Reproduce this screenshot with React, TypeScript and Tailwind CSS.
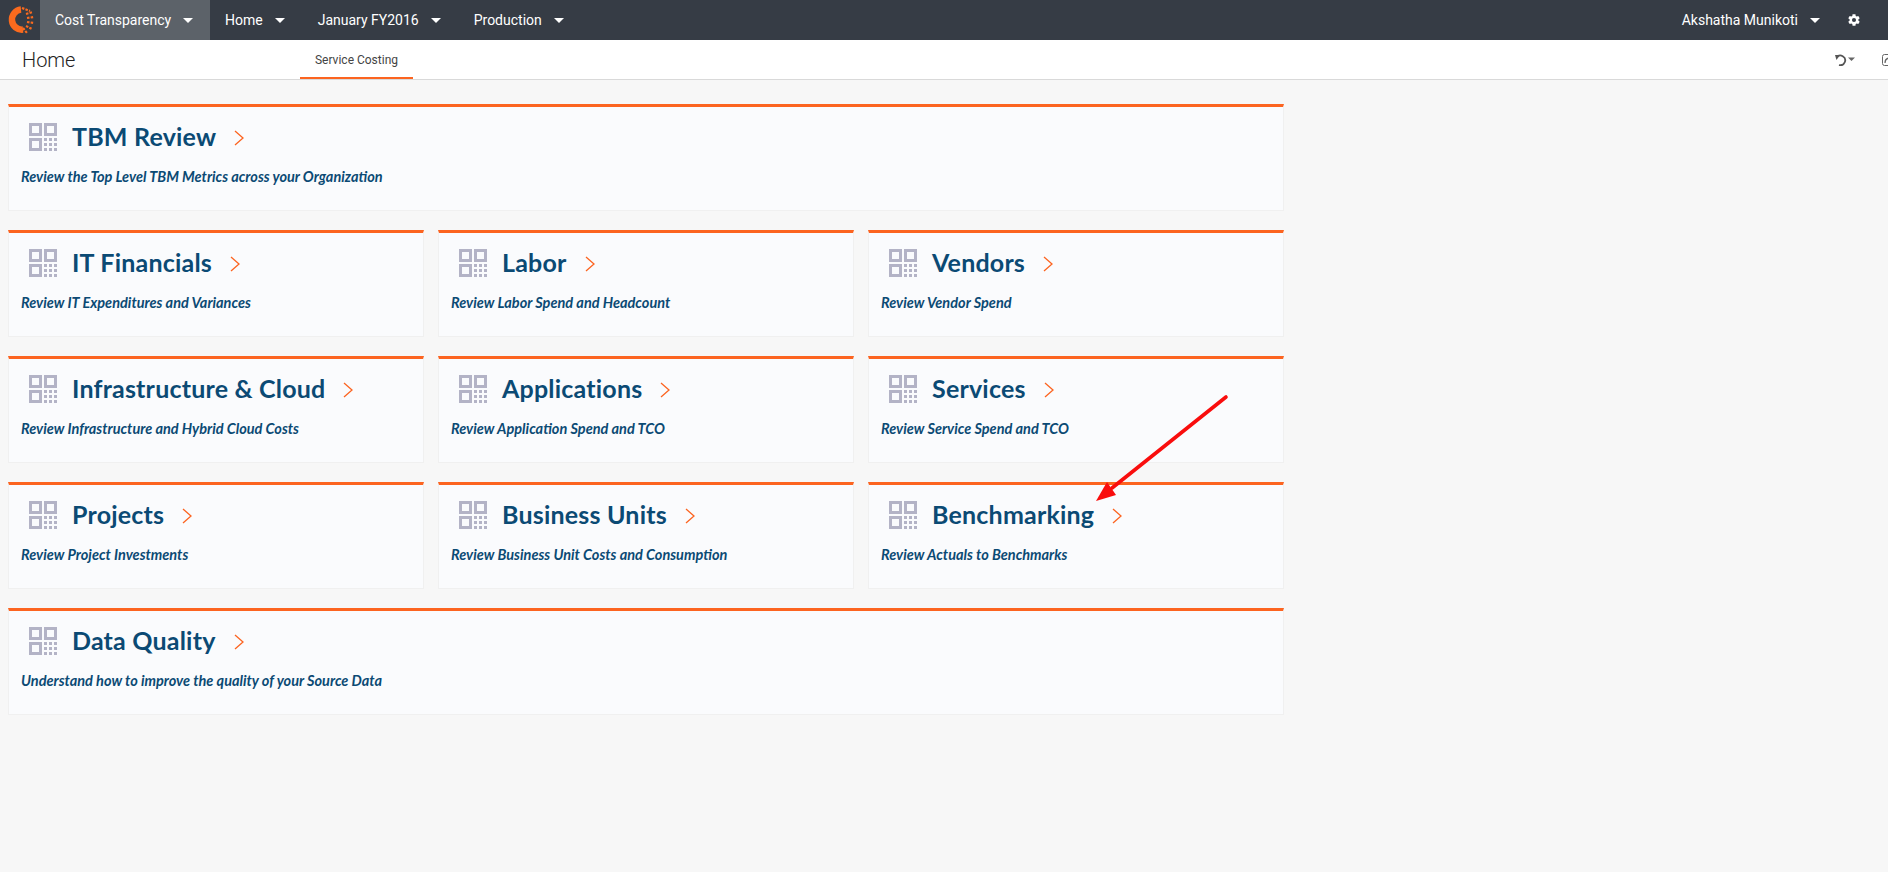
import React from "react";

const NavCaret = () => (
  <span className="ml-3 inline-block w-0 h-0 border-x-[5px] border-x-transparent border-t-[5px] border-t-white" />
);

const GridIcon = () => (
  <svg width="28" height="28" viewBox="0 0 28 28" className="shrink-0">
    <g fill="none" stroke="#b3b3c6" strokeWidth="3">
      <rect x="1.5" y="1.5" width="10" height="10" />
      <rect x="16.5" y="1.5" width="10" height="10" />
      <rect x="1.5" y="16.5" width="10" height="10" />
    </g>
    <g fill="#b3b3c6">
      <rect x="15" y="15" width="3" height="3" />
      <rect x="20" y="15" width="3" height="3" />
      <rect x="25" y="15" width="3" height="3" />
      <rect x="15" y="20" width="3" height="3" />
      <rect x="20" y="20" width="3" height="3" />
      <rect x="25" y="20" width="3" height="3" />
      <rect x="15" y="25" width="3" height="3" />
      <rect x="20" y="25" width="3" height="3" />
      <rect x="25" y="25" width="3" height="3" />
    </g>
  </svg>
);

const Logo = () => (
  <svg width="27" height="28" viewBox="0 0 27 28">
    <path
      d="M14 3.6A10 10 0 1 0 16 23.6"
      fill="none"
      stroke="#fa6a1e"
      strokeWidth="6.5"
    />
    <g stroke="#fa6a1e" strokeWidth="2.2" strokeDasharray="2.5 1.2">
      <path d="M15 2L23 5" />
      <path d="M19 8L26 6" />
      <path d="M20 12L27 11" />
      <path d="M20 16L27 17" />
      <path d="M19 20L25 23" />
      <path d="M16 22L20 27" />
    </g>
  </svg>
);

const Card = ({ title, desc }: { title: string; desc: string }) => (
  <div className="h-[107px] border-t-[3px] border-t-[#fc6420] border-x border-b border-x-[#f0f0f0] border-b-[#f0f0f0] bg-[#fafbfd] pl-[12px]">
    <div className="flex items-center h-[28px] mt-[16px] pl-[8px]">
      <GridIcon />
      <span className="ml-[15px] mb-[2px] text-[25px] leading-[28px] tracking-[0.2px] font-bold text-[#0b4a74] font-['Lato',sans-serif]">
        {title}
      </span>
      <svg width="10" height="16" viewBox="0 0 10 16" className="ml-[18px] mt-[1px]">
        <path d="M1 1L9 8L1 15" fill="none" stroke="#fc6420" strokeWidth="1.3" />
      </svg>
    </div>
    <p className="mt-[17px] text-[14.5px] leading-[18px] italic font-bold text-[#0b4a74] font-['Lato',sans-serif]">
      {desc}
    </p>
  </div>
);

export default function App() {
  return (
    <div className="relative min-h-[872px] bg-[#f7f7f7] font-['Roboto',sans-serif] overflow-hidden">
      <nav className="flex h-[40px] items-center bg-[#363c45] text-[14px] text-white whitespace-nowrap">
        <div className="flex w-[40px] justify-center">
          <Logo />
        </div>
        <div className="flex h-full w-[170px] items-center bg-[#5c6269] pl-[15px]">
          Cost Transparency
          <NavCaret />
        </div>
        <div className="flex items-center ml-[15px]">
          Home
          <NavCaret />
        </div>
        <div className="flex items-center ml-[33px]">
          January FY2016
          <NavCaret />
        </div>
        <div className="flex items-center ml-[33px]">
          Production
          <NavCaret />
        </div>
        <div className="ml-auto flex items-center pr-[27px]">
          Akshatha Munikoti
          <NavCaret />
          <svg width="14" height="14" viewBox="0 0 24 24" fill="#ffffff" className="ml-[27px]">
            <path d="M19.4 13a7.5 7.5 0 0 0 0-2l2.4-1.8-2.4-4.2-2.8 1.2a7.5 7.5 0 0 0-1.7-1L14.5 2h-5l-.4 3.2a7.5 7.5 0 0 0-1.7 1L4.6 5 2.2 9.2 4.6 11a7.5 7.5 0 0 0 0 2l-2.4 1.8L4.6 19l2.8-1.2a7.5 7.5 0 0 0 1.7 1l.4 3.2h5l.4-3.2a7.5 7.5 0 0 0 1.7-1l2.8 1.2 2.4-4.2zM12 15.5a3.5 3.5 0 1 1 0-7 3.5 3.5 0 0 1 0 7z" />
          </svg>
        </div>
      </nav>

      <header className="flex h-[40px] items-center border-b border-b-[#d9d9d9] bg-white">
        <h1 className="ml-[22px] w-[278px] text-[20px] font-light text-[#222]">Home</h1>
        <div className="flex h-full w-[113px] items-center justify-center border-b-[2px] border-b-[#fc6420] pt-[3px] text-[12px] text-[#444]">
          Service Costing
        </div>
        <div className="ml-auto flex items-center mr-[-6px]">
          <svg width="20" height="12" viewBox="0 0 20 12" className="shrink-0">
            <path d="M1.5 3.5A4.8 4.8 0 1 1 4 11" fill="none" stroke="#555" strokeWidth="1.8" />
            <path d="M0 1L5 1L1.5 6Z" fill="#555" />
            <path d="M13 3.5L20 3.5L16.5 7Z" fill="#666" />
          </svg>
          <svg width="12" height="12" viewBox="0 0 12 12" className="ml-[27px] shrink-0">
            <rect x="0.5" y="0.5" width="11" height="11" rx="2" fill="none" stroke="#666" />
            <path d="M3 9C3 5 5 4 8 4" fill="none" stroke="#666" strokeWidth="1.2" />
          </svg>
        </div>
      </header>

      <main className="w-[1276px] ml-[8px] mt-[24px] flex flex-col gap-[19px]">
        <Card title="TBM Review" desc="Review the Top Level TBM Metrics across your Organization" />
        <div className="grid grid-cols-3 gap-x-[14px] gap-y-[19px]">
          <Card title="IT Financials" desc="Review IT Expenditures and Variances" />
          <Card title="Labor" desc="Review Labor Spend and Headcount" />
          <Card title="Vendors" desc="Review Vendor Spend" />
          <Card title="Infrastructure & Cloud" desc="Review Infrastructure and Hybrid Cloud Costs" />
          <Card title="Applications" desc="Review Application Spend and TCO" />
          <Card title="Services" desc="Review Service Spend and TCO" />
          <Card title="Projects" desc="Review Project Investments" />
          <Card title="Business Units" desc="Review Business Unit Costs and Consumption" />
          <Card title="Benchmarking" desc="Review Actuals to Benchmarks" />
        </div>
        <Card title="Data Quality" desc="Understand how to improve the quality of your Source Data" />
      </main>

      <svg width="140" height="115" viewBox="0 0 140 115" className="absolute left-[1090px] top-[390px]">
        <path d="M136 7L22 98" stroke="#f90d0d" strokeWidth="3.6" strokeLinecap="round" />
        <path d="M6 111L17 92L26 105Z" fill="#f90d0d" />
      </svg>
    </div>
  );
}
